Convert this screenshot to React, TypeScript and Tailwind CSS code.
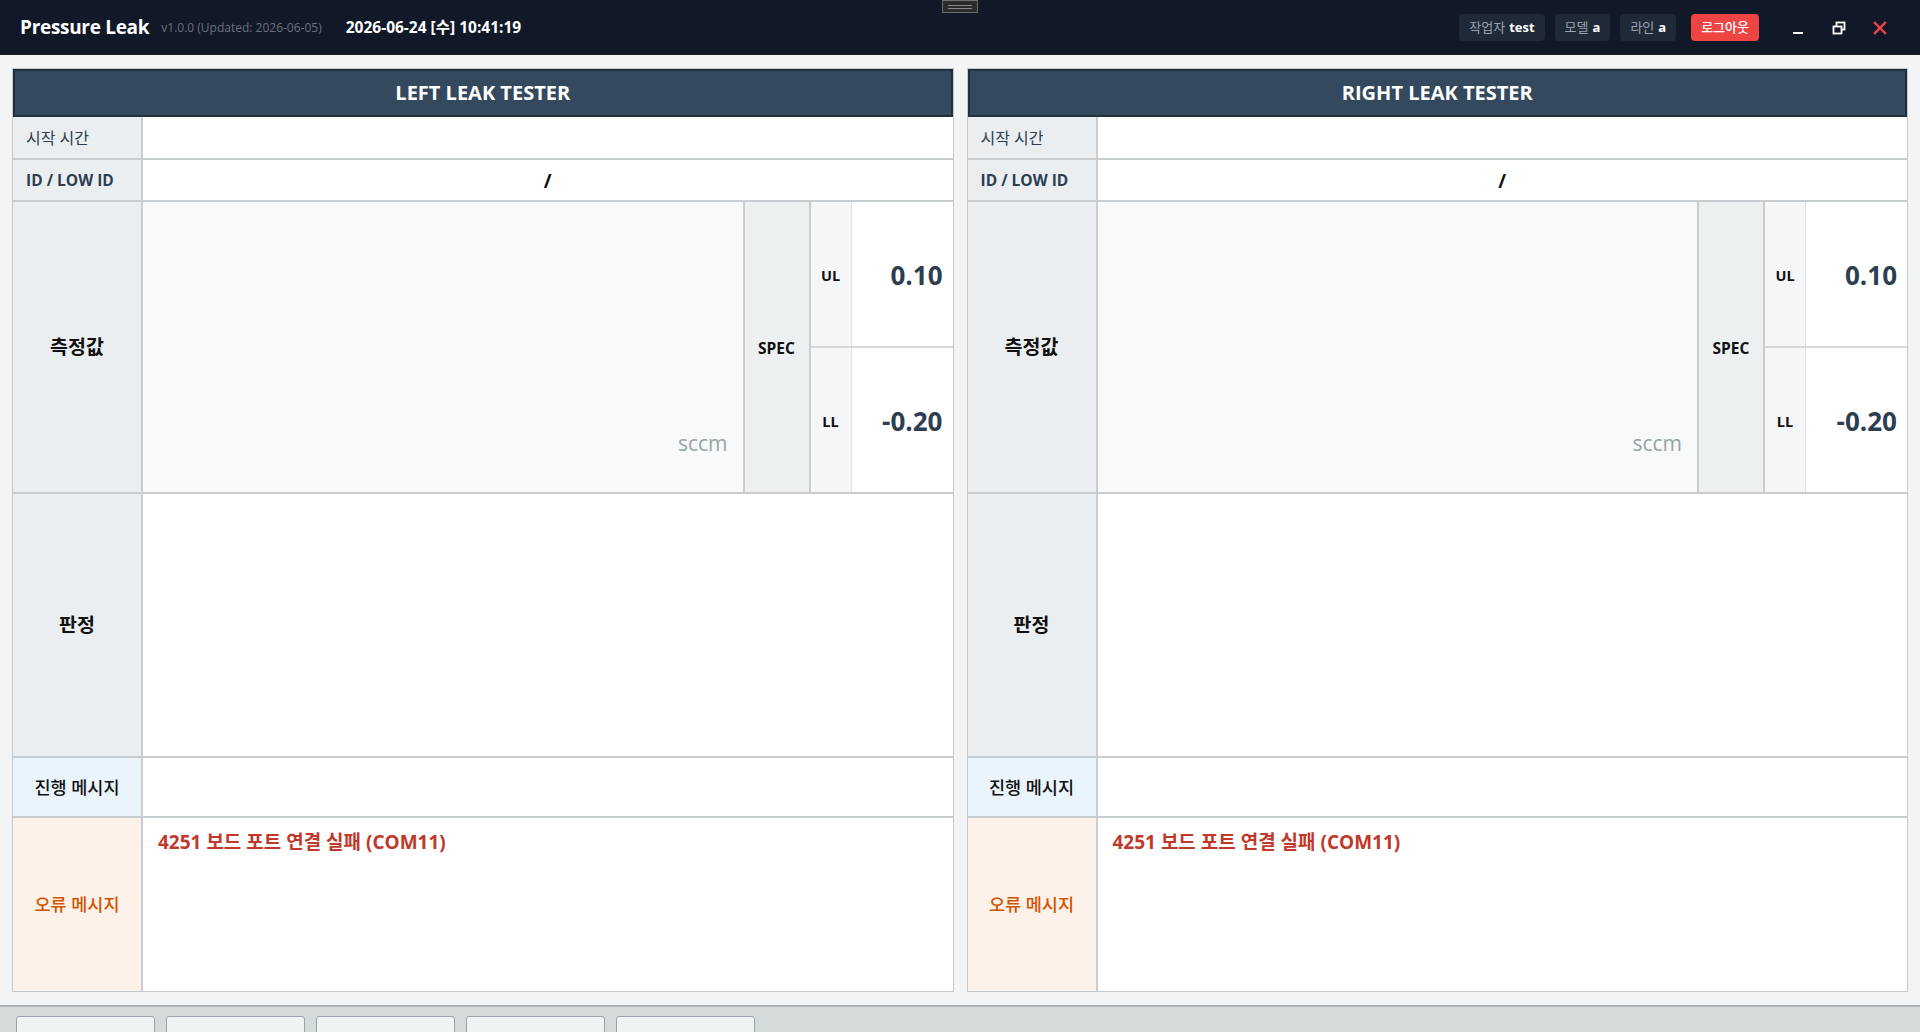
import React from "react";

type PanelProps = { title: string };

function TesterPanel({ title }: PanelProps) {
  return (
    <section className="flex flex-col border border-[#c3c8cd] bg-white min-h-0">
      <div className="h-[48px] shrink-0 flex items-center justify-center bg-[#34495e] border-2 border-[#22303d] text-white text-[20px] font-bold">
        {title}
      </div>

      {/* start time */}
      <div className="h-[43px] shrink-0 flex border-b-2 border-[#c8cdd2]">
        <div className="w-[130px] shrink-0 bg-[#ebeef0] border-r-2 border-[#c8cdd2] pl-[13px] flex items-center text-[16px] text-[#2c3e50]">
          시작 시간
        </div>
        <div className="flex-1 bg-white" />
      </div>

      {/* id / low id */}
      <div className="h-[42px] shrink-0 flex border-b-2 border-[#c8cdd2]">
        <div className="w-[130px] shrink-0 bg-[#ebeef0] border-r-2 border-[#c8cdd2] pl-[13px] pt-[2px] flex items-center text-[15.5px] font-bold text-[#2c3e50]">
          ID / LOW ID
        </div>
        <div className="flex-1 bg-white flex items-center justify-center pt-[2px] text-[19px] font-bold text-[#111]">
          /
        </div>
      </div>

      {/* measured value + spec */}
      <div className="h-[292px] shrink-0 flex border-b-2 border-[#c8cdd2]">
        <div className="w-[130px] shrink-0 bg-[#ebeef0] border-r-2 border-[#c8cdd2] flex items-center justify-center text-[19.5px] font-bold text-[#111]">
          측정값
        </div>
        <div className="flex-1 bg-[#f8f9f9] flex flex-col justify-end items-end pr-[15px] pb-[33px] text-[21px] text-[#95a5a6]">
          sccm
        </div>
        <div className="w-[66px] shrink-0 bg-[#ecf0f1] border-l-2 border-[#c8cdd2] flex items-center justify-center pt-[3px] text-[15.5px] font-bold text-[#111]">
          SPEC
        </div>
        <div className="w-[144px] shrink-0 flex flex-col border-l-2 border-[#c8cdd2]">
          <div className="flex-1 flex border-b-2 border-[#d6d9dc]">
            <div className="w-[40px] shrink-0 bg-[#f4f6f7] flex items-center justify-center pt-[3px] text-[14.5px] font-bold text-[#111]">
              UL
            </div>
            <div className="flex-1 bg-white border-l border-[#dfe2e5] flex items-center justify-end pr-[10px] pt-[3px] text-[26px] font-bold text-[#2c3e50]">
              0.10
            </div>
          </div>
          <div className="flex-1 flex">
            <div className="w-[40px] shrink-0 bg-[#f4f6f7] flex items-center justify-center pt-[3px] text-[14.5px] font-bold text-[#111]">
              LL
            </div>
            <div className="flex-1 bg-white border-l border-[#dfe2e5] flex items-center justify-end pr-[10px] pt-[3px] text-[26px] font-bold text-[#2c3e50]">
              -0.20
            </div>
          </div>
        </div>
      </div>

      {/* judgement */}
      <div className="h-[264px] shrink-0 flex border-b-2 border-[#c8cdd2]">
        <div className="w-[130px] shrink-0 bg-[#ebeef0] border-r-2 border-[#c8cdd2] flex items-center justify-center text-[19.5px] font-bold text-[#111]">
          판정
        </div>
        <div className="flex-1 bg-white" />
      </div>

      {/* progress message */}
      <div className="h-[60px] shrink-0 flex border-b-2 border-[#c8cdd2]">
        <div className="w-[130px] shrink-0 bg-[#eaf4fc] border-r-2 border-[#c8cdd2] flex items-center justify-center text-[17.5px] font-medium text-[#111]">
          진행 메시지
        </div>
        <div className="flex-1 bg-white" />
      </div>

      {/* error message */}
      <div className="flex-1 min-h-0 flex">
        <div className="w-[130px] shrink-0 bg-[#fdf2e9] border-r-2 border-[#c8cdd2] flex items-center justify-center text-[17.5px] font-medium text-[#d35400]">
          오류 메시지
        </div>
        <div className="flex-1 bg-white pl-[15px] pt-[10px] text-[19px] font-bold text-[#c0392b]">
          4251 보드 포트 연결 실패 (COM11)
        </div>
      </div>
    </section>
  );
}

function Chip({ label, value }: { label: string; value: string }) {
  return (
    <div className="h-[27px] px-[10px] rounded-[4px] bg-[#1f2937] flex items-center gap-[4px] text-[13px]">
      <span className="text-[#9ca3af]">{label}</span>
      <span className="text-white font-bold">{value}</span>
    </div>
  );
}

export default function App() {
  return (
    <div className="relative h-[1032px] w-full overflow-hidden bg-[#f3f4f6] font-['Open_Sans','Noto_Sans_CJK_KR',sans-serif]">
      {/* title bar */}
      <header className="relative h-[55px] bg-[#111827] flex items-center pl-[20px] pr-[20px]">
        <div className="flex items-center">
          <span className="text-white text-[19px] font-bold tracking-[-0.3px]">Pressure Leak</span>
          <span className="ml-[12px] text-[12px] text-[#6b7280]">v1.0.0 (Updated: 2026-06-05)</span>
          <span className="ml-[24px] text-white text-[15.5px] font-bold">2026-06-24 [수] 10:41:19</span>
        </div>

        <div className="ml-auto flex items-center">
          <div className="flex items-center gap-[10px]">
            <Chip label="작업자" value="test" />
            <Chip label="모델" value="a" />
            <Chip label="라인" value="a" />
          </div>
          <button className="ml-[15px] h-[27px] px-[10px] rounded-[4px] bg-[#ef4444] text-white text-[13px] font-medium flex items-center">
            로그아웃
          </button>
          <div className="ml-[18px] flex items-center">
            <button className="w-[41px] h-[30px] flex items-center justify-center">
              <svg width="14" height="14" viewBox="0 0 14 14">
                <rect x="2" y="11" width="10" height="2" fill="#ffffff" />
              </svg>
            </button>
            <button className="w-[41px] h-[30px] flex items-center justify-center">
              <svg width="14" height="14" viewBox="0 0 14 14" fill="none" stroke="#ffffff" strokeWidth="1.8">
                <rect x="4.5" y="1.5" width="8" height="7" />
                <rect x="1.5" y="5.5" width="8" height="7" fill="#111827" />
              </svg>
            </button>
            <button className="w-[41px] h-[30px] flex items-center justify-center">
              <svg width="14" height="14" viewBox="0 0 14 14" fill="none" stroke="#ef4444" strokeWidth="2.4" strokeLinecap="square">
                <path d="M2 2 L12 12 M12 2 L2 12" />
              </svg>
            </button>
          </div>
        </div>

        {/* drag grip */}
        <div className="absolute top-0 left-1/2 -translate-x-1/2 w-[36px] h-[13px] bg-[#2b2b2b] border border-[#6e6e6e] flex flex-col items-center justify-center gap-[2px]">
          <div className="w-[24px] h-[1px] bg-[#8a8a8a]" />
          <div className="w-[24px] h-[1px] bg-[#8a8a8a]" />
        </div>
      </header>

      {/* tester panels */}
      <main className="h-[950px] px-[12px] py-[13px] grid grid-cols-2 gap-[13px]">
        <TesterPanel title="LEFT LEAK TESTER" />
        <TesterPanel title="RIGHT LEAK TESTER" />
      </main>

      {/* bottom tab bar */}
      <footer className="border-t-2 border-[#aab2ba] bg-[#d5dbdb] h-[60px] pt-[9px] px-[16px] flex gap-[11px]">
        <button className="w-[139px] h-[40px] bg-[#f0f3f3] border border-[#97a4af] rounded-t-[3px]" />
        <button className="w-[139px] h-[40px] bg-[#f0f3f3] border border-[#97a4af] rounded-t-[3px]" />
        <button className="w-[139px] h-[40px] bg-[#f0f3f3] border border-[#97a4af] rounded-t-[3px]" />
        <button className="w-[139px] h-[40px] bg-[#f0f3f3] border border-[#97a4af] rounded-t-[3px]" />
        <button className="w-[139px] h-[40px] bg-[#f0f3f3] border border-[#97a4af] rounded-t-[3px]" />
      </footer>
    </div>
  );
}
